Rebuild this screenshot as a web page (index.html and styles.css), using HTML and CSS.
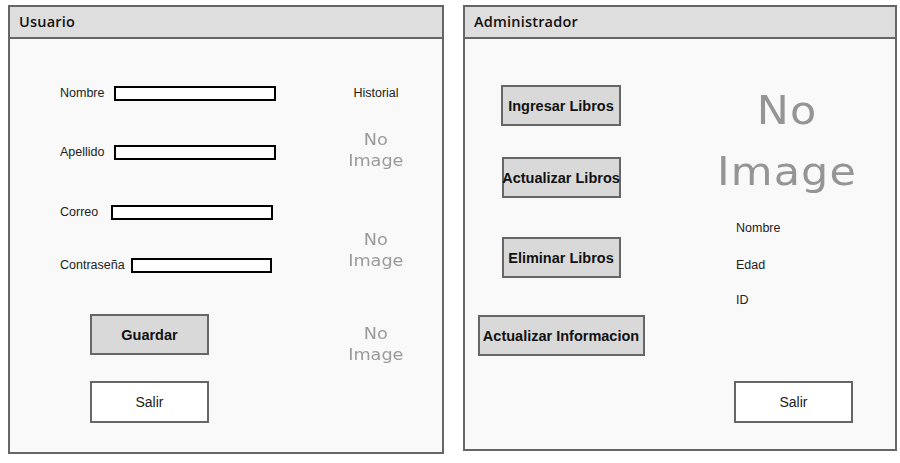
FILE: index.html
```html
<!DOCTYPE html>
<html lang="es">
<head>
<meta charset="utf-8">
<title>Usuario / Administrador</title>
<link rel="stylesheet" href="styles.css">
</head>
<body>
<div class="screens">
  <section class="panel panel-user">
    <header class="panel-head">Usuario</header>
    <div class="panel-body">
      <div class="form-col">
        <div class="field field-nombre"><span class="lbl">Nombre</span><span class="inp"></span></div>
        <div class="field field-apellido"><span class="lbl">Apellido</span><span class="inp"></span></div>
        <div class="field field-correo"><span class="lbl">Correo</span><span class="inp"></span></div>
        <div class="field field-pass"><span class="lbl">Contraseña</span><span class="inp"></span></div>
        <div class="btn btn-primary btn-guardar">Guardar</div>
        <div class="btn btn-plain btn-salir">Salir</div>
      </div>
      <div class="hist-col">
        <div class="hist-title">Historial</div>
        <div class="noimg noimg-1"><span>No</span><span>Image</span></div>
        <div class="noimg noimg-2"><span>No</span><span>Image</span></div>
        <div class="noimg noimg-3"><span>No</span><span>Image</span></div>
      </div>
    </div>
  </section>
  <section class="panel panel-admin">
    <header class="panel-head">Administrador</header>
    <div class="panel-body">
      <div class="btn-col">
        <div class="btn btn-primary btn-ingresar">Ingresar Libros</div>
        <div class="btn btn-primary btn-actualizar">Actualizar Libros</div>
        <div class="btn btn-primary btn-eliminar">Eliminar Libros</div>
        <div class="btn btn-primary btn-info">Actualizar Informacion</div>
      </div>
      <div class="info-col">
        <div class="bigimg"><span>No</span><span>Image</span></div>
        <div class="info info-nombre">Nombre</div>
        <div class="info info-edad">Edad</div>
        <div class="info info-id">ID</div>
        <div class="btn btn-plain btn-salir2">Salir</div>
      </div>
    </div>
  </section>
</div>
</body>
</html>
```

FILE: styles.css
```css
* { box-sizing: border-box; }
html, body { margin: 0; padding: 0; background: #ffffff; }
body {
  padding: 5px 0 0 8px;
  font-family: "Liberation Sans", Arial, sans-serif;
  color: #222;
}
.screens { display: flex; gap: 19px; align-items: flex-start; }

.panel {
  border: 2px solid #666;
  background: #f9f9f9;
  display: flex;
  flex-direction: column;
}
.panel-user { width: 436px; height: 449px; }
.panel-admin { width: 434px; height: 446px; }

.panel-head {
  height: 32px;
  background: #dedede;
  border-bottom: 2px solid #666;
  font-family: "Open Sans", "DejaVu Sans", sans-serif;
  font-weight: 600;
  font-size: 14.5px;
  letter-spacing: 0.2px;
  line-height: 30px;
  color: #111;
  padding-left: 9px;
}
.panel-body { flex: 1; display: flex; }

/* ---- Usuario ---- */
.form-col {
  width: 300px;
  padding-left: 50px;
  display: flex;
  flex-direction: column;
  align-items: flex-start;
}
.field { display: flex; align-items: center; height: 15px; }
.lbl { font-size: 12.5px; line-height: 15px; color: #222; }
.inp {
  display: block;
  height: 15px;
  background: #fff;
  border: 2px solid #000;
}
.field-nombre { margin-top: 47px; }
.field-nombre .inp { margin-left: 10px; width: 162px; }
.field-apellido { margin-top: 44px; }
.field-apellido .inp { margin-left: 10px; width: 162px; }
.field-correo { margin-top: 45px; }
.field-correo .inp { margin-left: 13px; width: 162px; }
.field-pass { margin-top: 38px; }
.field-pass .inp { margin-left: 6px; width: 141px; }

.btn {
  display: flex;
  align-items: center;
  justify-content: center;
  height: 41px;
  border: 2px solid #666;
  white-space: nowrap;
  color: #111;
}
.btn-primary {
  background: #d9d9d9;
  font-weight: bold;
  font-size: 14.5px;
}
.btn-plain {
  background: #fff;
  font-size: 14px;
  color: #222;
}
.btn-guardar { margin-top: 41px; margin-left: 30px; width: 119px; }
.btn-salir { margin-top: 26px; margin-left: 30px; width: 119px; height: 42px; }

.hist-col {
  flex: 1;
  display: flex;
  flex-direction: column;
  align-items: center;
}
.hist-title { margin-top: 47px; font-size: 12.5px; line-height: 15px; color: #222; }
.noimg {
  display: flex;
  flex-direction: column;
  align-items: center;
  font-family: "DejaVu Sans", sans-serif;
  font-size: 16.5px;
  line-height: 21px;
  color: #9a9a9a;
  transform: scaleX(1.07);
  white-space: nowrap;
}
.noimg-1 { margin-top: 28px; }
.noimg-2 { margin-top: 58px; }
.noimg-3 { margin-top: 52px; }

/* ---- Administrador ---- */
.btn-col {
  width: 192px;
  display: flex;
  flex-direction: column;
  align-items: center;
}
.btn-ingresar { margin-top: 46px; width: 120px; }
.btn-actualizar { margin-top: 31px; width: 119px; }
.btn-eliminar { margin-top: 39px; width: 119px; }
.btn-info { margin-top: 37px; width: 167px; }

.info-col {
  flex: 1;
  display: flex;
  flex-direction: column;
  align-items: flex-start;
}
.bigimg {
  margin-top: 41px;
  margin-left: 73px;
  width: 114px;
  display: flex;
  flex-direction: column;
  align-items: center;
  font-family: "DejaVu Sans", sans-serif;
  font-size: 39px;
  line-height: 61px;
  letter-spacing: 1px;
  color: #959595;
  transform: scaleX(1.1);
  filter: blur(0.7px);
  white-space: nowrap;
}
.info { margin-left: 79px; font-size: 12.5px; line-height: 15px; color: #222; }
.info-nombre { margin-top: 19px; }
.info-edad { margin-top: 22px; }
.info-id { margin-top: 20px; }
.btn-salir2 { margin-top: 73px; margin-left: 77px; width: 119px; height: 42px; }
```
